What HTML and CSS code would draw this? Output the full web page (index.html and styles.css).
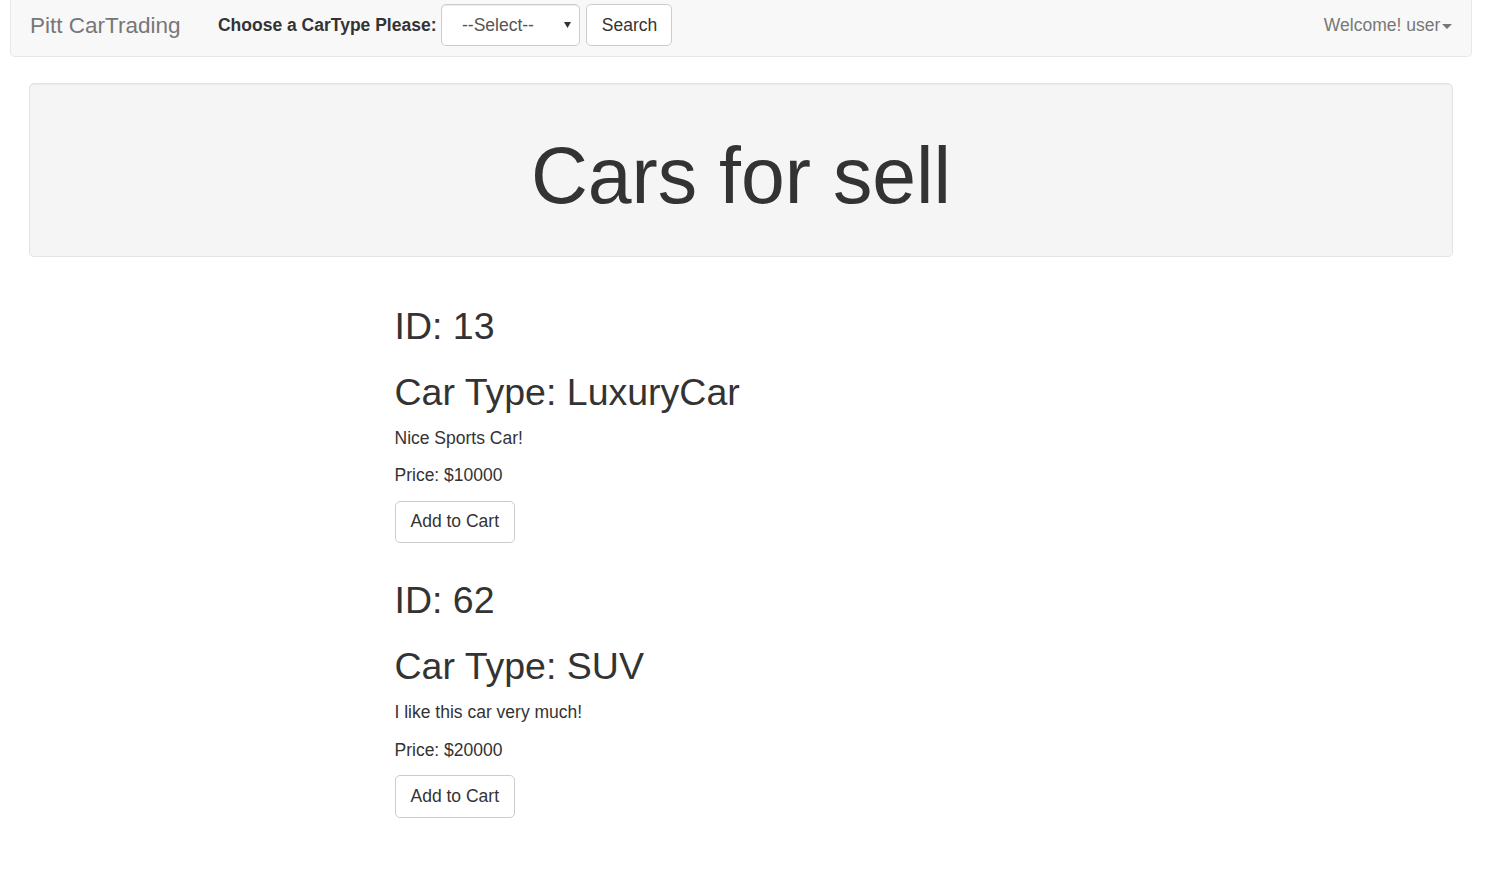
FILE: index.html
```html
<!DOCTYPE html>
<html lang="en">
<head>
<meta charset="utf-8">
<title>Pitt CarTrading</title>
<link rel="stylesheet" href="styles.css">
</head>
<body>
<div class="page">
  <nav class="navbar">
    <a class="brand" href="#">Pitt CarTrading</a>
    <form class="navbar-form">
      <label class="type-label" for="cartype">Choose a CarType Please:</label>
      <span class="select-wrap">
        <select id="cartype" class="form-select">
          <option>--Select--</option>
          <option>LuxuryCar</option>
          <option>SUV</option>
        </select>
        <svg class="select-arrow" width="7" height="6" viewBox="0 0 7 6"><path d="M0 0 L7 0 L3.5 6 Z" fill="#333"/></svg>
      </span>
      <button type="button" class="btn">Search</button>
    </form>
    <a class="user-menu" href="#">Welcome! user<span class="caret"></span></a>
  </nav>

  <div class="well">
    <h1>Cars for sell</h1>
  </div>

  <div class="cars">
    <div class="car">
      <h2>ID: 13</h2>
      <h2>Car Type: LuxuryCar</h2>
      <p>Nice Sports Car!</p>
      <p>Price: $10000</p>
      <form class="cart-form"><button type="button" class="btn">Add to Cart</button></form>
    </div>
    <div class="car">
      <h2>ID: 62</h2>
      <h2>Car Type: SUV</h2>
      <p>I like this car very much!</p>
      <p>Price: $20000</p>
      <form class="cart-form"><button type="button" class="btn">Add to Cart</button></form>
    </div>
  </div>
</div>
</body>
</html>
```

FILE: styles.css
```css
* {
  box-sizing: border-box;
}

html, body {
  margin: 0;
  padding: 0;
  background: #fff;
}

body {
  font-family: "Liberation Sans", Arial, Helvetica, sans-serif;
  font-size: 17.5px;
  line-height: 25px;
  color: #333;
}

.page {
  display: flex;
  flex-direction: column;
  padding: 0 18px 0 10px;
}

/* Navbar */
.navbar {
  display: flex;
  align-items: center;
  height: 57px;
  padding-bottom: 6px;
  background: #f8f8f8;
  border: 1.25px solid #e7e7e7;
  border-top: none;
  border-radius: 0 0 5px 5px;
}

.brand {
  margin-left: 19px;
  padding-right: 18.75px;
  font-size: 22.5px;
  line-height: 25px;
  color: #777;
  text-decoration: none;
}

.navbar-form {
  display: flex;
  align-items: center;
  margin: 0;
  padding-left: 18.75px;
}

.type-label {
  font-weight: bold;
  font-size: 17.5px;
  color: #333;
  margin-right: 5px;
}

.select-wrap {
  position: relative;
  display: inline-flex;
  margin-right: 6px;
}

.form-select {
  -webkit-appearance: none;
  appearance: none;
  width: 139px;
  height: 42.5px;
  padding: 0 20px 0 19.5px;
  font-family: inherit;
  font-size: 17.5px;
  color: #555;
  background: #fff;
  border: 1.25px solid #ccc;
  border-radius: 5px;
  box-shadow: inset 0 1px 1px rgba(0, 0, 0, .075);
  outline: none;
}

.select-arrow {
  position: absolute;
  right: 9px;
  top: 18px;
  pointer-events: none;
}

.btn {
  display: inline-block;
  height: 42.5px;
  padding: 7.5px 0;
  font-family: inherit;
  font-size: 17.5px;
  line-height: 25px;
  white-space: nowrap;
  text-align: center;
  color: #333;
  background: #fff;
  border: 1.25px solid #ccc;
  border-radius: 5px;
  cursor: pointer;
}

.navbar-form .btn {
  width: 86px;
  padding: 0;
  height: 41.5px;
}

.user-menu {
  margin-left: auto;
  padding-right: 18.75px;
  font-size: 17.5px;
  color: #777;
  text-decoration: none;
  display: flex;
  align-items: center;
}

.caret {
  display: inline-block;
  width: 0;
  height: 0;
  margin-left: 2px;
  margin-top: 2px;
  border-top: 5px solid #777;
  border-left: 5px solid transparent;
  border-right: 5px solid transparent;
}

/* Well */
.well {
  margin: 26px 18.75px 24px;
  padding: 23.75px;
  background: #f5f5f5;
  border: 1.25px solid #e3e3e3;
  border-radius: 5px;
  box-shadow: inset 0 1px 1px rgba(0, 0, 0, .05);
}

.well h1 {
  margin: 25px 0 12.5px;
  font-size: 78.75px;
  line-height: 1.1;
  font-weight: normal;
  text-align: center;
  color: #333;
}

/* Cars */
.cars {
  display: flex;
  flex-direction: column;
  gap: 12px;
  margin-left: 384.5px;
}

.car {
  display: flow-root;
}

.car h2 {
  margin: 25px 0 12.5px;
  font-size: 37.5px;
  line-height: 1.1;
  font-weight: normal;
  color: #333;
}

.car p {
  margin: 0 0 12.5px;
}

.cart-form {
  margin: 0;
}

.cart-form .btn {
  width: 120.5px;
}
```
